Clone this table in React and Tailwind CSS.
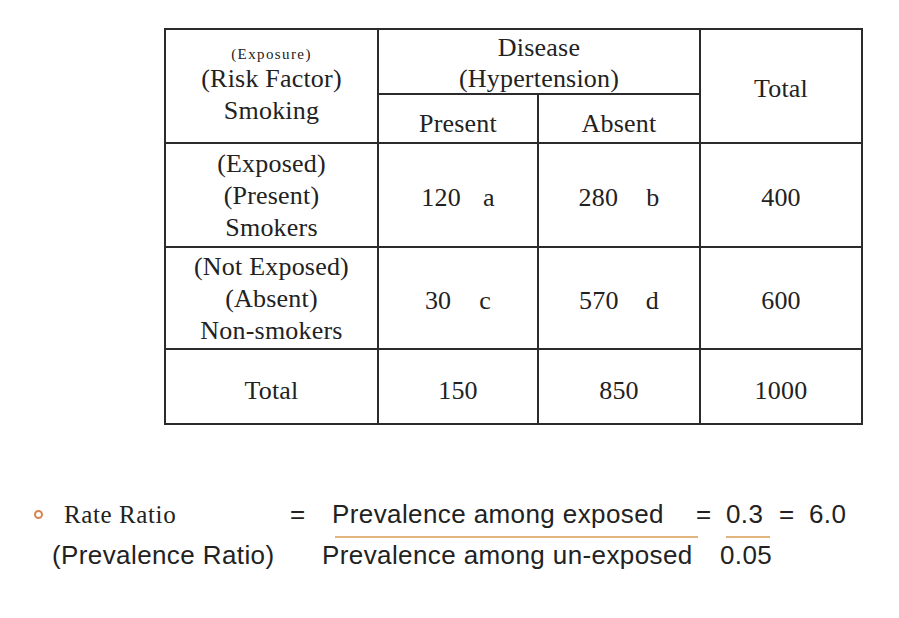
import React from 'react';

const serif = { fontFamily: '"Liberation Serif", "Times New Roman", serif' };
const sans = { fontFamily: '"Liberation Sans", Arial, sans-serif' };

function Cell({ className = '', children }) {
  return (
    <div className={`flex flex-col items-center justify-center border-r-2 border-b-2 border-[#2b2b2b] text-center ${className}`}>
      {children}
    </div>
  );
}

function Val({ n, tag, gap }) {
  return (
    <span>
      {n}
      {tag && <span className={gap}>{tag}</span>}
    </span>
  );
}

export default function App() {
  return (
    <div className="w-[899px] h-[618px] bg-white text-[#222] overflow-hidden">
      {/* 2x2 table */}
      <div className="pt-[28px] pl-[164px]" style={serif}>
        <div className="grid w-[699px] grid-cols-[213px_160px_162px_162px] grid-rows-[65px_49px_104px_102px_75px] border-l-2 border-t-2 border-[#2b2b2b] text-[26px] leading-[32px] tracking-[0.2px]">
          <Cell className="row-span-2">
            <div className="text-[15px] leading-[18px] tracking-[1.4px]">(Exposure)</div>
            <div>(Risk Factor)</div>
            <div>Smoking</div>
          </Cell>
          <Cell className="col-span-2 leading-[31px] pt-[2px]">
            <div>Disease</div>
            <div>(Hypertension)</div>
          </Cell>
          <Cell className="row-span-2 pt-[6px]">Total</Cell>
          <Cell className="pt-[10px]">Present</Cell>
          <Cell className="pt-[10px]">Absent</Cell>

          <Cell className="pt-[2px]">
            <div>(Exposed)</div>
            <div>(Present)</div>
            <div>Smokers</div>
          </Cell>
          <Cell className="pt-[6px]"><Val n="120" tag="a" gap="ml-[22px]" /></Cell>
          <Cell className="pt-[6px]"><Val n="280" tag="b" gap="ml-[28px]" /></Cell>
          <Cell className="pt-[6px]">400</Cell>

          <Cell className="pt-[2px]">
            <div>(Not Exposed)</div>
            <div>(Absent)</div>
            <div>Non-smokers</div>
          </Cell>
          <Cell className="pt-[6px]"><Val n="30" tag="c" gap="ml-[28px]" /></Cell>
          <Cell className="pt-[6px]"><Val n="570" tag="d" gap="ml-[27px]" /></Cell>
          <Cell className="pt-[6px]">600</Cell>

          <Cell className="pt-[8px]">Total</Cell>
          <Cell className="pt-[8px]">150</Cell>
          <Cell className="pt-[8px]">850</Cell>
          <Cell className="pt-[8px]">1000</Cell>
        </div>
      </div>

      {/* Prevalence ratio formula */}
      <div className="mt-[74px] text-[26px] leading-[30px] tracking-[0.4px]" style={sans}>
        <div className="flex items-baseline">
          <span className="ml-[34px] mr-[21px] inline-block h-[9px] w-[9px] self-center rounded-full border-2 border-[#d9834f]" />
          <span className="w-[226px] text-[25px] tracking-[0.6px]" style={serif}>Rate Ratio</span>
          <span className="w-[42px]">=</span>
          <span className="w-[364px]">Prevalence among exposed</span>
          <span className="w-[30px]">=</span>
          <span className="w-[53px]">0.3</span>
          <span className="w-[30px]">=</span>
          <span>6.0</span>
        </div>
        <div className="mt-[6px] flex">
          <div className="ml-[335px] h-[2px] w-[363px] bg-[#e2b47e]" />
          <div className="ml-[28px] h-[2px] w-[44px] bg-[#e2b47e]" />
        </div>
        <div className="mt-[2px] flex items-baseline">
          <span className="ml-[52px] w-[270px]">(Prevalence Ratio)</span>
          <span className="w-[398px]">Prevalence among un-exposed</span>
          <span>0.05</span>
        </div>
      </div>
    </div>
  );
}
